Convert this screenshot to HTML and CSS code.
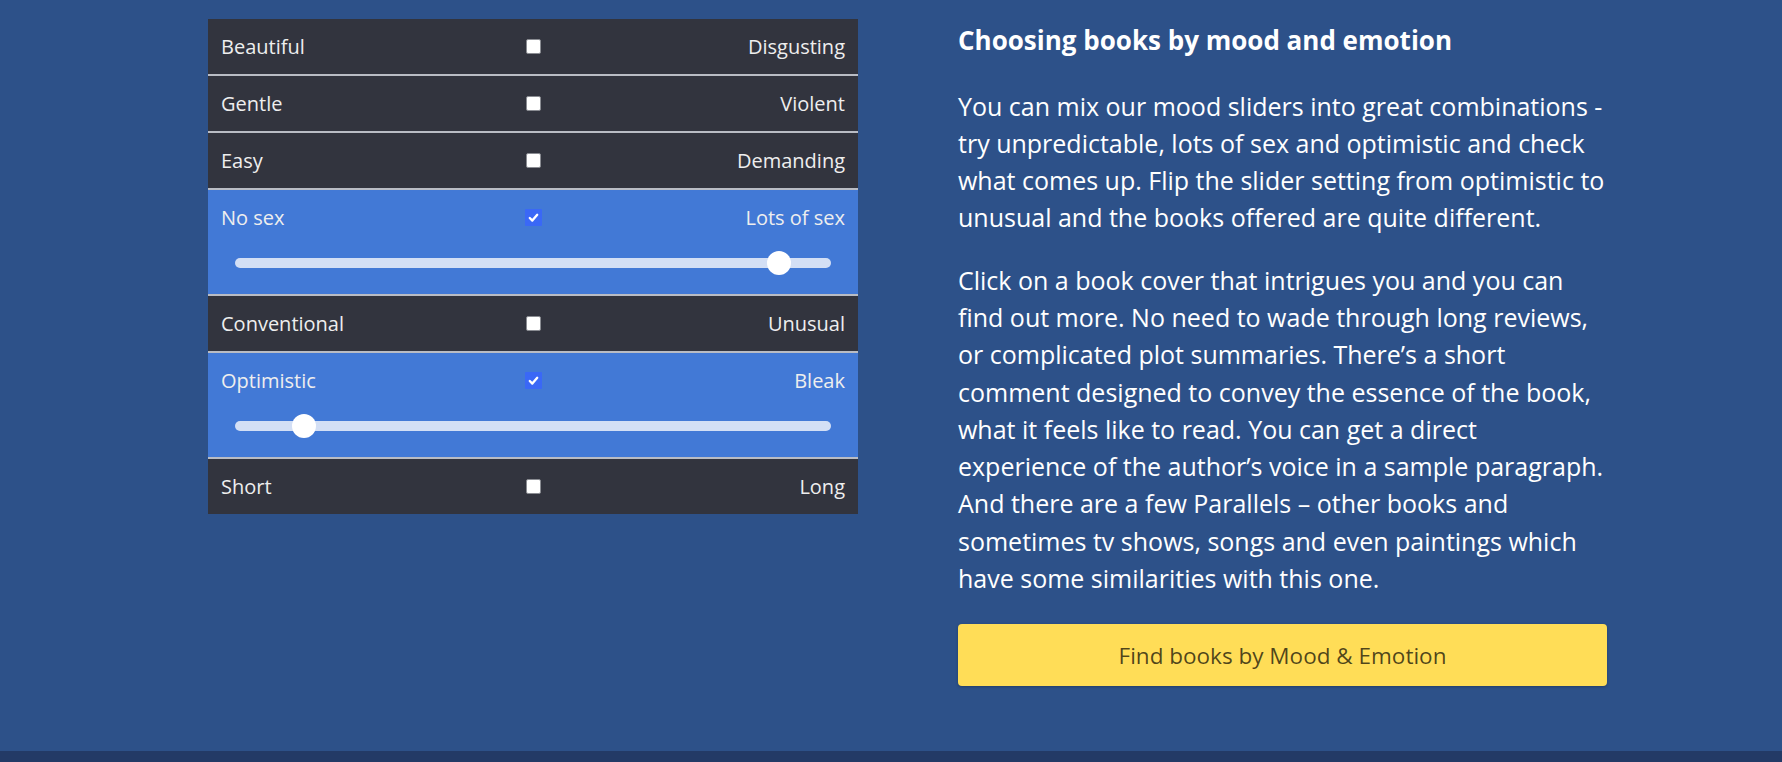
FILE: index.html
```html
<!DOCTYPE html>
<html lang="en">
<head>
    <meta charset="UTF-8">
    <meta name="viewport" content="width=device-width, initial-scale=1.0">
    <title>Choosing books by mood and emotion</title>
    <link rel="stylesheet" href="styles.css">
</head>
<body>
    <section class="mood-section">
        <div class="columns">

            <div class="mood-panel">
                <div class="mood-row">
                    <div class="mood-head">
                        <span>Beautiful</span>
                        <span class="box"></span>
                        <span class="right">Disgusting</span>
                    </div>
                </div>
                <div class="mood-row">
                    <div class="mood-head">
                        <span>Gentle</span>
                        <span class="box"></span>
                        <span class="right">Violent</span>
                    </div>
                </div>
                <div class="mood-row">
                    <div class="mood-head">
                        <span>Easy</span>
                        <span class="box"></span>
                        <span class="right">Demanding</span>
                    </div>
                </div>
                <div class="mood-row active">
                    <div class="mood-head">
                        <span>No sex</span>
                        <span class="box checked"><svg viewBox="0 0 16 16"><path d="M4.5 8.5l2.4 2.4L11.5 5.5"/></svg></span>
                        <span class="right">Lots of sex</span>
                    </div>
                    <div class="mood-slider">
                        <input type="range" min="0" max="100" value="93">
                    </div>
                </div>
                <div class="mood-row">
                    <div class="mood-head">
                        <span>Conventional</span>
                        <span class="box"></span>
                        <span class="right">Unusual</span>
                    </div>
                </div>
                <div class="mood-row active">
                    <div class="mood-head">
                        <span>Optimistic</span>
                        <span class="box checked"><svg viewBox="0 0 16 16"><path d="M4.5 8.5l2.4 2.4L11.5 5.5"/></svg></span>
                        <span class="right">Bleak</span>
                    </div>
                    <div class="mood-slider">
                        <input type="range" min="0" max="100" value="10">
                    </div>
                </div>
                <div class="mood-row">
                    <div class="mood-head">
                        <span>Short</span>
                        <span class="box"></span>
                        <span class="right">Long</span>
                    </div>
                </div>
            </div>

            <div class="mood-text">
                <h2>Choosing books by mood and emotion</h2>
                <p>You can mix our mood sliders into great combinations - try unpredictable, lots of sex and optimistic and check what comes up. Flip the slider setting from optimistic to unusual and the books offered are quite different.</p>
                <p>Click on a book cover that intrigues you and you can find out more. No need to wade through long reviews, or complicated plot summaries. There’s a short comment designed to convey the essence of the book, what it feels like to read. You can get a direct experience of the author’s voice in a sample paragraph. And there are a few Parallels – other books and sometimes tv shows, songs and even paintings which have some similarities with this one.</p>
                <a class="button" href="#">Find books by Mood &amp; Emotion</a>
            </div>

        </div>
    </section>

    <footer></footer>
</body>
</html>
```

FILE: styles.css
```css
body {
    font-family: "Open Sans", "Noto Sans", sans-serif;
    margin: 0;
    padding: 0;
    background-color: #2d5189;
    color: white;
}
.mood-section {
    height: 751px;
    box-sizing: border-box;
    padding-top: 19px;
    overflow: hidden;
}
.columns {
    display: flex;
    align-items: flex-start;
    gap: 100px;
    padding-left: 208px;
}
.mood-panel {
    width: 650px;
    flex-shrink: 0;
    background-color: #32343e;
    color: #eeeeee;
    font-size: 20px;
}
.mood-row {
    border-top: 2px solid #b9bcc4;
}
.mood-row:first-child {
    border-top: none;
}
.mood-row.active {
    background-color: #4279d6;
}
.mood-head {
    display: grid;
    grid-template-columns: 1fr auto 1fr;
    align-items: center;
    height: 55px;
    padding: 0 13px;
}
.mood-head .right {
    text-align: right;
}
.box {
    display: block;
    width: 13px;
    height: 13px;
    background-color: white;
    border: 1px solid #8a8c92;
    border-radius: 2px;
}
.box.checked {
    width: 17px;
    height: 17px;
    border: none;
    border-radius: 1px;
    background-color: #3a68f6;
}
.box svg {
    display: block;
    width: 17px;
    height: 17px;
    fill: none;
    stroke: white;
    stroke-width: 2.2;
    stroke-linecap: round;
    stroke-linejoin: round;
}
.mood-slider {
    display: flex;
    align-items: center;
    box-sizing: border-box;
    height: 49px;
    padding: 0 27px 14px;
}
.mood-slider input {
    -webkit-appearance: none;
    appearance: none;
    display: block;
    width: 100%;
    height: 10px;
    margin: 0;
    padding: 0;
    border-radius: 5px;
    background-color: #d3dff5;
    outline: none;
}
.mood-slider input::-webkit-slider-thumb {
    -webkit-appearance: none;
    width: 24px;
    height: 24px;
    border-radius: 50%;
    background-color: white;
    border: none;
}
.mood-text {
    width: 652px;
}
.mood-text h2 {
    font-size: 26px;
    font-weight: 700;
    line-height: 1.25;
    margin: 5px 0 31px;
}
.mood-text p {
    font-size: 25px;
    line-height: 37.3px;
    margin: 0 0 25px;
}
.mood-text p:last-of-type {
    margin-bottom: 27px;
}
.button {
    display: flex;
    align-items: center;
    justify-content: center;
    width: 649px;
    height: 62px;
    box-sizing: border-box;
    background-color: #ffdd57;
    color: rgba(0, 0, 0, 0.7);
    font-size: 22.5px;
    text-decoration: none;
    border-radius: 4px;
    box-shadow: 0 1px 3px rgba(0, 0, 0, 0.25);
}
footer {
    height: 11px;
    background-color: #233a66;
}
```
